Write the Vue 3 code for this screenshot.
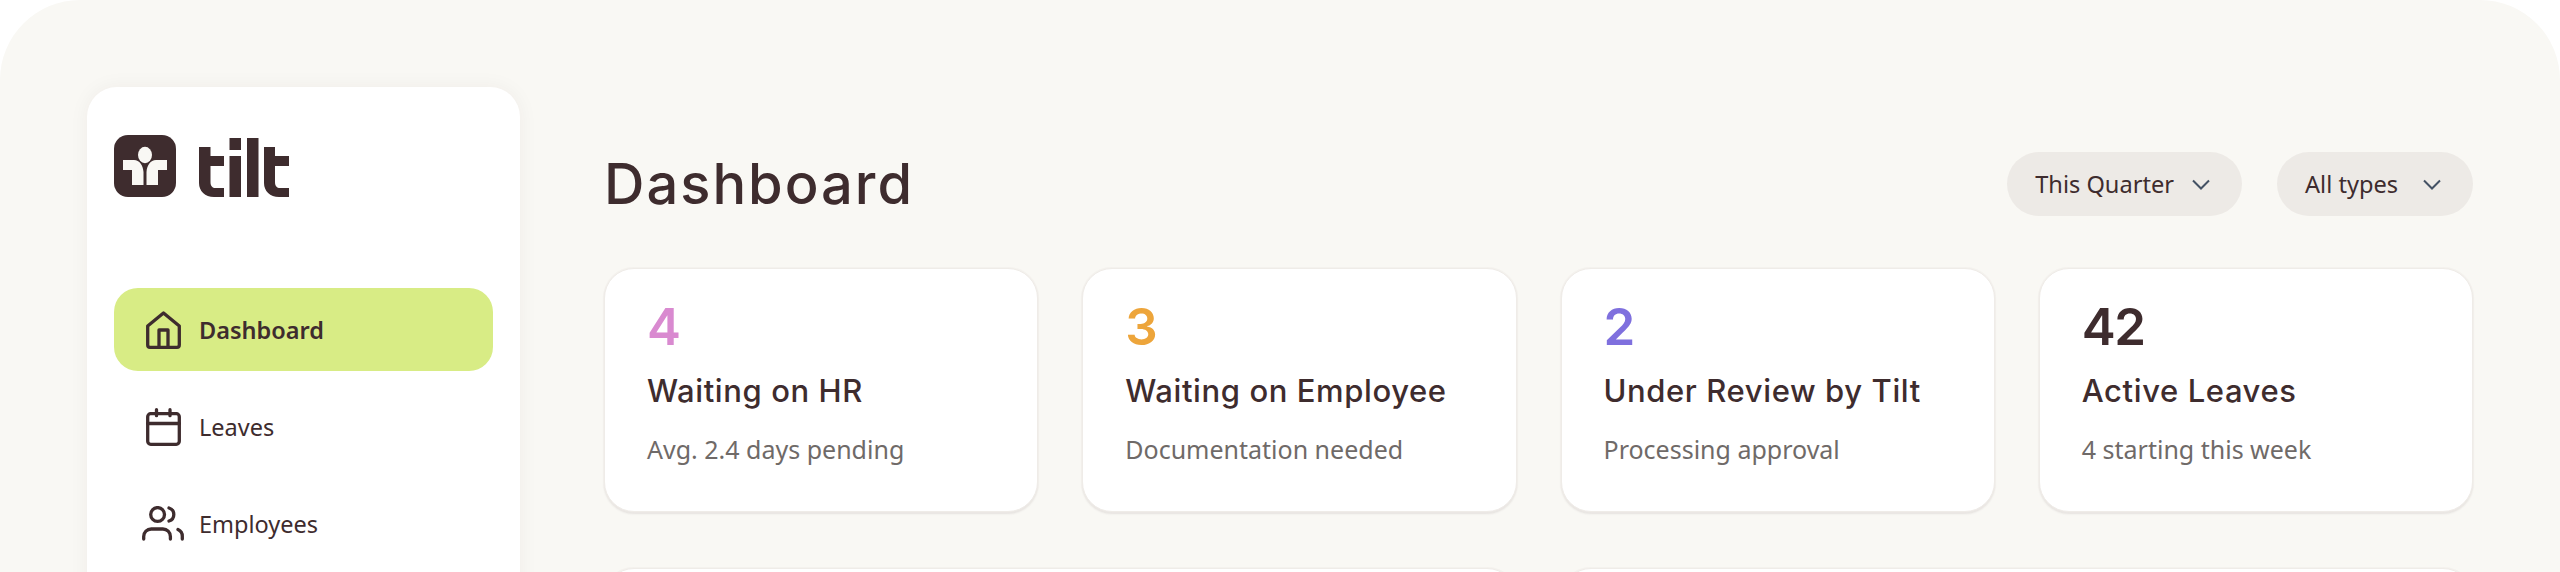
<script setup>
const navItems = [
  { label: 'Dashboard', icon: 'home', active: true },
  { label: 'Leaves', icon: 'calendar' },
  { label: 'Employees', icon: 'users' }
]

const stats = [
  { value: '4', color: '#d98ad0', title: 'Waiting on HR', note: 'Avg. 2.4 days pending' },
  { value: '3', color: '#eda53b', title: 'Waiting on Employee', note: 'Documentation needed' },
  { value: '2', color: '#7f70de', title: 'Under Review by Tilt', note: 'Processing approval' },
  { value: '42', color: '#3e2c2e', title: 'Active Leaves', note: '4 starting this week' }
]

const filters = ['This Quarter', 'All types']
</script>

<template>
  <div class="page">
    <div class="frame">
      <aside class="sidebar">
        <div class="logo">
          <svg class="logo-mark" viewBox="0 0 62 62" width="62" height="62">
            <rect width="62" height="62" rx="14" fill="#3e2c2e" />
            <ellipse cx="31" cy="20" rx="7" ry="8.2" fill="#f9f8f4" />
            <path d="M9 25h11c5.5 0 9 5 9.5 12v13H18V35H9z" fill="#f9f8f4" />
            <path d="M53 25H42c-5.500 0-9 5-9.500 12v13H44V35h9z" fill="#f9f8f4" />
          </svg>
          <svg class="logo-word" viewBox="0 0 90 59" width="90" height="59">
            <path d="M0 9h11.500v9H25v10H11.500v16c0 4 2 6 5 6H25v9H15C6 59 0 53 0 45z" fill="#3e2c2e" />
            <rect x="30.500" y="0" width="11.500" height="12" fill="#3e2c2e" />
            <rect x="30.500" y="18" width="11.500" height="41" fill="#3e2c2e" />
            <rect x="48" y="0" width="11.500" height="59" fill="#3e2c2e" />
            <path d="M65 9h11v9h14v10H76v16c0 4 2 6 5 6h9v9H80c-9 0-15-6-15-14z" fill="#3e2c2e" />
          </svg>
        </div>
        <nav class="nav">
          <a v-for="item in navItems" :key="item.label" class="nav-item" :class="{ active: item.active }">
            <span class="nav-icon">
              <svg v-if="item.icon === 'home'" viewBox="0 0 35 38" width="35" height="38" fill="none" stroke="#3e2c2e" stroke-width="3.300" stroke-linejoin="round">
                <path d="M1.700 15 17.500 1.900 33.300 15v19a2.300 2.300 0 0 1-2.300 2.300H4A2.300 2.300 0 0 1 1.700 34z" />
                <path d="M13 36V19h9v17" />
              </svg>
              <svg v-if="item.icon === 'calendar'" viewBox="0 0 35 38" width="35" height="38" fill="none" stroke="#3e2c2e" stroke-width="3.300" stroke-linecap="round">
                <rect x="1.700" y="5.700" width="31.600" height="30.600" rx="3" />
                <path d="M1.700 15.500h31.600M10.500 1.700v6M24 1.700v6" />
              </svg>
              <svg v-if="item.icon === 'users'" viewBox="0 0 42 35" width="42" height="35" fill="none" stroke="#3e2c2e" stroke-width="3.300" stroke-linecap="round">
                <circle cx="15.600" cy="8.500" r="6.900" />
                <path d="M1.700 33v-2.500a7.500 7.500 0 0 1 7.500-7.500h11.700a7.500 7.500 0 0 1 7.500 7.500V33" />
                <path d="M27 2a6.800 6.800 0 0 1 0 13M36 23.500a7.500 7.500 0 0 1 4.300 7V33" />
              </svg>
            </span>
            <span>{{ item.label }}</span>
          </a>
        </nav>
      </aside>

      <main class="main">
        <header class="header">
          <h1 class="title">Dashboard</h1>
          <div class="filters">
            <button v-for="f in filters" :key="f" class="filter">
              <span>{{ f }}</span>
              <svg viewBox="0 0 18 11" width="18" height="11" fill="none" stroke="#445264" stroke-width="2">
                <path d="M1 1.500l8 8 8-8" />
              </svg>
            </button>
          </div>
        </header>

        <section class="stats">
          <div v-for="s in stats" :key="s.title" class="stat-card">
            <div class="stat-value" :style="{ color: s.color }">{{ s.value }}</div>
            <div class="stat-title">{{ s.title }}</div>
            <div class="stat-note">{{ s.note }}</div>
          </div>
        </section>

        <section class="lower">
          <div class="panel"></div>
          <div class="panel"></div>
        </section>
      </main>
    </div>
  </div>
</template>

<style>
html, body {
  margin: 0;
  background: #fff;
  overflow: hidden;
}
</style>

<style scoped>
.page {
  width: 2560px;
  height: 572px;
  overflow: hidden;
  background: #fff;
}

.frame {
  display: flex;
  height: 900px;
  padding: 87px 87px 0 87px;
  box-sizing: border-box;
  background: #f9f8f4;
  border-radius: 80px 80px 0 0;
  font-family: "Noto Sans", sans-serif;
  color: #3e2c2e;
}

.sidebar {
  flex: none;
  width: 433px;
  box-sizing: border-box;
  padding: 48px 27px 0;
  background: #fff;
  border-radius: 30px;
  box-shadow: 0 0 20px rgba(62, 44, 46, 0.05);
}

.logo {
  display: flex;
  align-items: flex-end;
  gap: 23px;
  height: 62px;
}

.nav {
  display: flex;
  flex-direction: column;
  gap: 14px;
  margin-top: 91px;
}

.nav-item {
  display: flex;
  align-items: center;
  gap: 15px;
  height: 83px;
  padding: 0 28px;
  border-radius: 24px;
  font-size: 23.500px;
}

.nav-item.active {
  background: #d8ec85;
  font-weight: 600;
}

.nav-icon {
  display: flex;
  align-items: center;
  justify-content: center;
  width: 42px;
}

.main {
  flex: 1;
  min-width: 0;
  margin-left: 84px;
}

.header {
  display: flex;
  align-items: center;
  justify-content: space-between;
  height: 68px;
  margin-top: 63px;
}

.title {
  margin: 0;
  font-family: Inter, sans-serif;
  font-size: 56px;
  font-weight: 500;
  letter-spacing: 2px;
}

.filters {
  display: flex;
  gap: 35px;
}

.filter {
  display: flex;
  align-items: center;
  justify-content: space-between;
  gap: 18px;
  min-width: 196px;
  height: 64px;
  padding: 0 32px 0 28px;
  border: none;
  border-radius: 32px;
  background: #edeae6;
  color: #3e2c2e;
  font-family: "Noto Sans", sans-serif;
  font-size: 23.600px;
}

.stats {
  display: grid;
  grid-template-columns: repeat(4, 1fr);
  gap: 44px;
  margin-top: 50px;
}

.stat-card {
  height: 244px;
  box-sizing: border-box;
  padding: 27px 42px;
  background: #fff;
  border: 1px solid #efece8;
  border-radius: 30px;
  box-shadow: 0 0 0 1px rgba(239, 236, 232, 0.5), 0 2px 2px rgba(62, 44, 46, 0.1);
}

.stat-value {
  font-family: Inter, sans-serif;
  font-size: 51px;
  font-weight: 600;
  line-height: 62px;
  letter-spacing: -1.500px;
}

.stat-title {
  margin-top: 11px;
  font-family: Inter, sans-serif;
  font-size: 31px;
  font-weight: 500;
  line-height: 44px;
  letter-spacing: 0.600px;
}

.stat-note {
  margin-top: 18px;
  font-size: 25px;
  line-height: 36px;
  color: #6f6a68;
}

.lower {
  display: grid;
  grid-template-columns: 1fr 1fr;
  gap: 44px;
  margin-top: 56px;
}

.panel {
  height: 300px;
  background: #fff;
  border: 1px solid #efece8;
  border-radius: 30px;
  box-shadow: 0 0 0 1px rgba(239, 236, 232, 0.5);
}
</style>
